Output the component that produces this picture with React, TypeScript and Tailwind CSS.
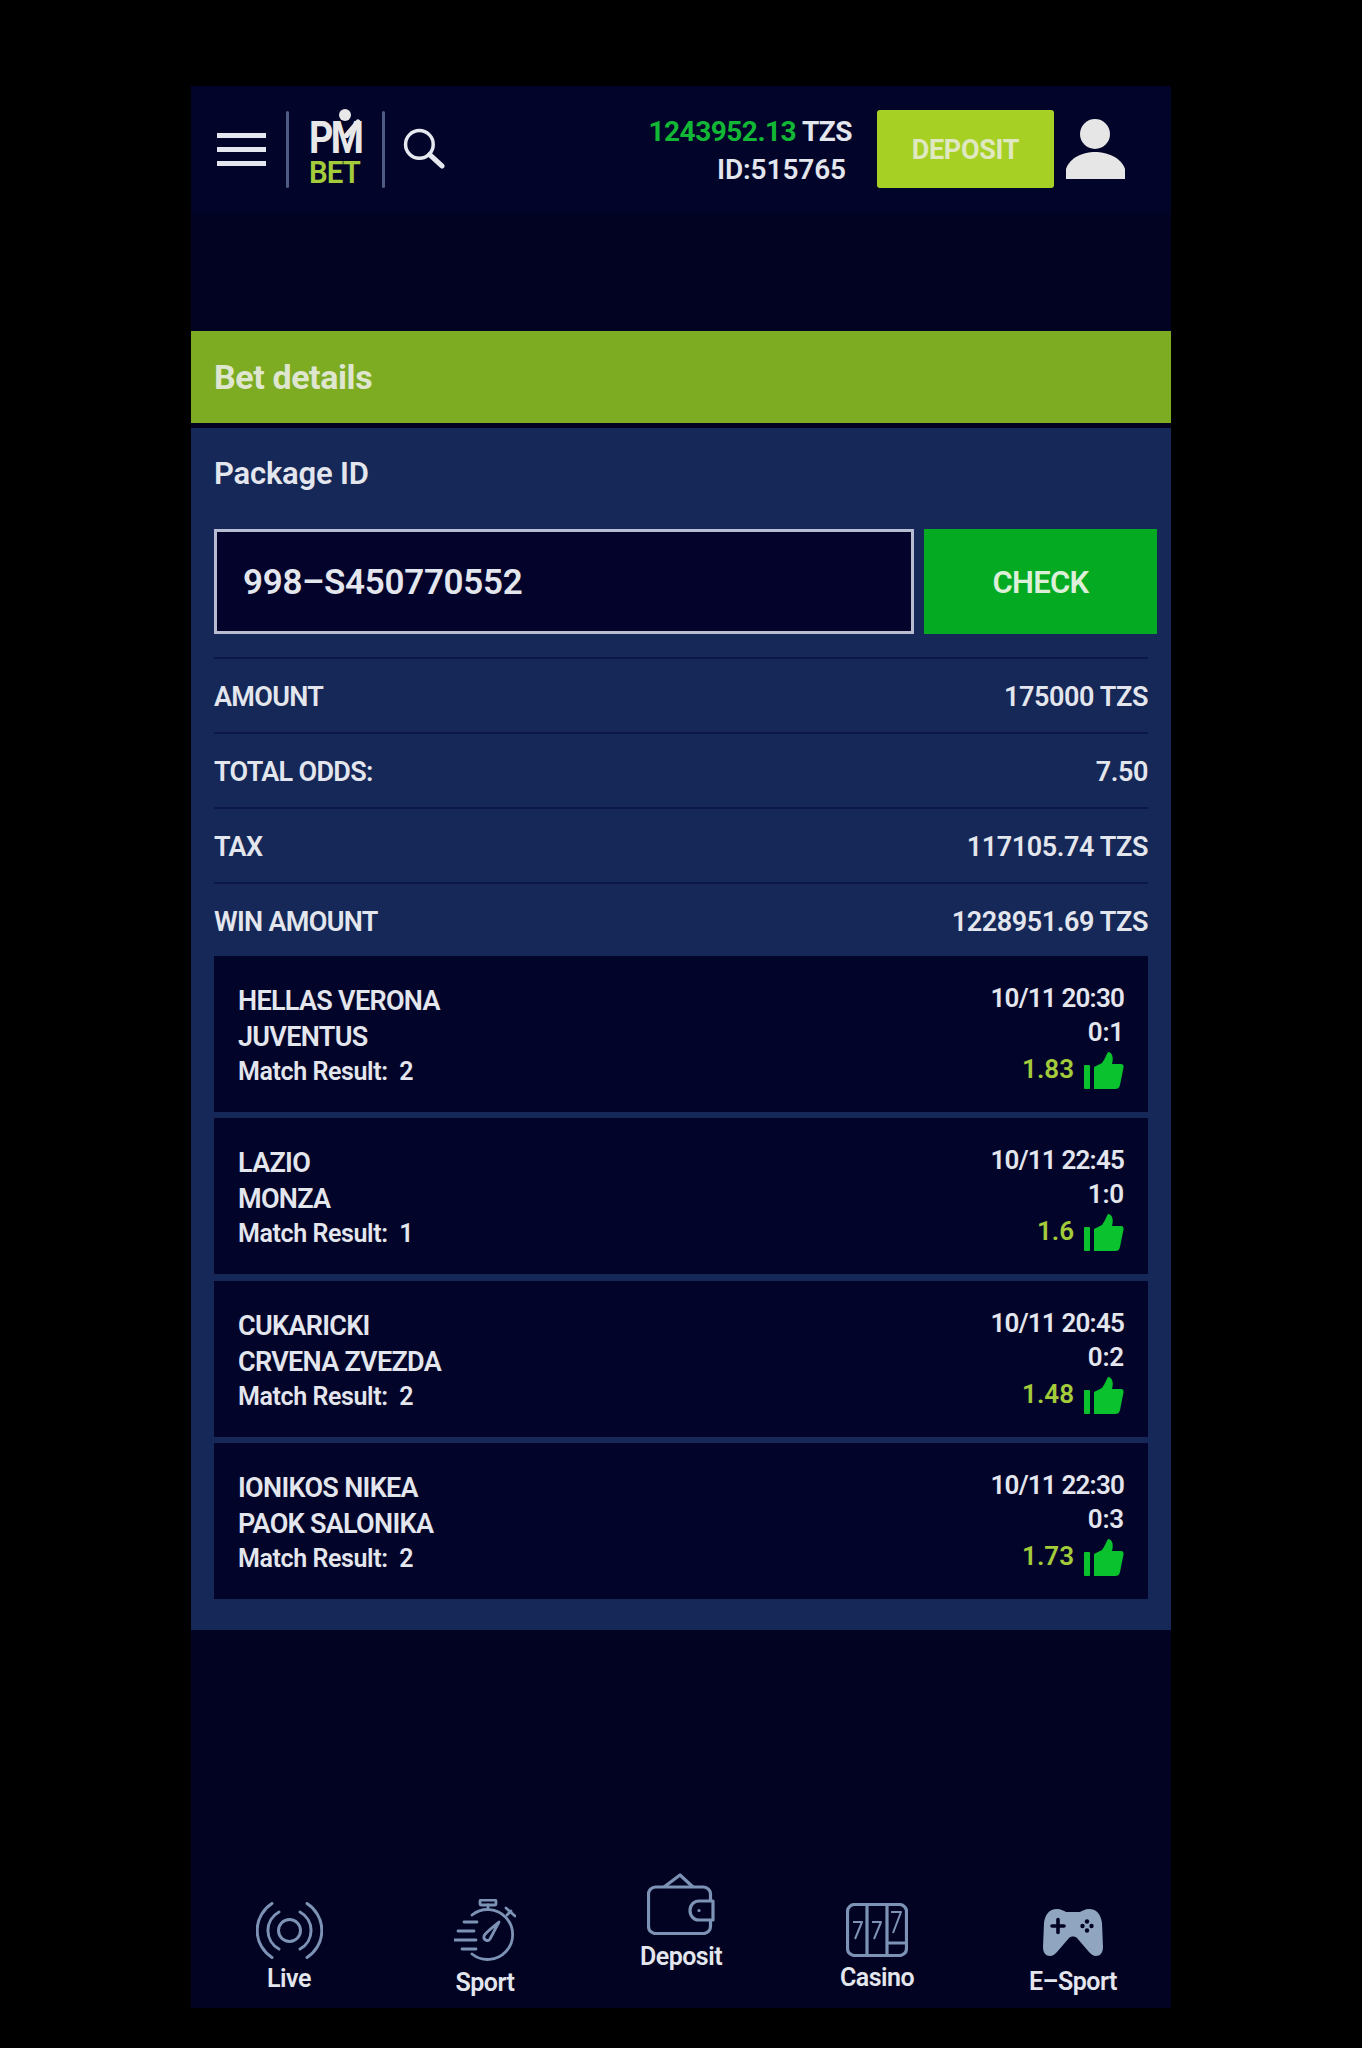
const rows = [
  { label: "AMOUNT", value: "175000 TZS" },
  { label: "TOTAL ODDS:", value: "7.50" },
  { label: "TAX", value: "117105.74 TZS" },
  { label: "WIN AMOUNT", value: "1228951.69 TZS" },
];

const matches = [
  { home: "HELLAS VERONA", away: "JUVENTUS", pick: "2", date: "10/11 20:30", score: "0:1", odds: "1.83" },
  { home: "LAZIO", away: "MONZA", pick: "1", date: "10/11 22:45", score: "1:0", odds: "1.6" },
  { home: "CUKARICKI", away: "CRVENA ZVEZDA", pick: "2", date: "10/11 20:45", score: "0:2", odds: "1.48" },
  { home: "IONIKOS NIKEA", away: "PAOK SALONIKA", pick: "2", date: "10/11 22:30", score: "0:3", odds: "1.73" },
];

function Thumb() {
  return (
    <svg className="mt-[3px]" width="40" height="37" viewBox="0 0 40 37" fill="#0ac22e">
      <rect x="0" y="13" width="6" height="24" rx="1" />
      <path d="M10 15 L18 11 C21 7 22 3 24 0 C28 0 30 5 28 12 L37 12 C40 12 40 15 39 18 L36 33 C35 36 34 37 31 37 H10Z" />
    </svg>
  );
}

function LiveIcon() {
  return (
    <svg width="67" height="57" viewBox="0 0 67 57" fill="none" stroke="#7d93b5" strokeWidth="3" strokeLinecap="round">
      <circle cx="33.5" cy="28.5" r="11" />
      <path d="M23 10 A 21 21 0 0 0 23 47" />
      <path d="M44 10 A 21 21 0 0 1 44 47" />
      <path d="M16 1.5 A 32 32 0 0 0 16 55.5" />
      <path d="M51 1.5 A 32 32 0 0 1 51 55.5" />
    </svg>
  );
}

function SportIcon() {
  return (
    <svg width="62" height="63" viewBox="0 0 62 63" fill="none" stroke="#7d93b5" strokeWidth="2.8" strokeLinecap="round" strokeLinejoin="round">
      <path d="M18 16 A 25 25 0 1 1 18 55" />
      <rect x="26" y="1" width="16" height="5" rx="1.5" />
      <path d="M34 6 V10" />
      <path d="M52 9 L61 17 M53 16 L57 12" />
      <path d="M10 23 H23 M4 32 H20 M0 41 H22 M8 50 H22" />
      <path d="M45 23 L36 40 C34 43 29 41 30 37 C31 34 38 29 45 23Z" />
    </svg>
  );
}

function WalletIcon() {
  return (
    <svg width="68" height="62" viewBox="0 0 68 62" fill="none" stroke="#7d93b5" strokeWidth="3.2" strokeLinejoin="round">
      <rect x="1.5" y="14" width="62" height="46.5" rx="7" />
      <path d="M17 14 L33 2 L46 14" />
      <path d="M66 28 H52 C47 28 43 32 43 37.5 C43 43 47 47 52 47 H66Z" fill="#020322" />
      <circle cx="52" cy="37.5" r="1.6" fill="#7d93b5" stroke="none" />
    </svg>
  );
}

function CasinoIcon() {
  return (
    <svg width="62" height="54" viewBox="0 0 62 54" fill="none" stroke="#7d93b5" strokeWidth="3.2" strokeLinejoin="round">
      <rect x="1.5" y="1.5" width="59" height="51" rx="7" />
      <path d="M21 1.5 V52.5 M41 1.5 V52.5 M41 40 H60" />
      <path d="M7 19 H16 L9 36 M26 19 H35 L28 36 M45 9 H55 L47 30" strokeWidth="2" />
    </svg>
  );
}

function GamepadIcon() {
  return (
    <svg width="60" height="47" viewBox="0 0 60 47">
      <path fill="#8fa5c0" d="M14 0 C6 0 2 6 1 14 L0 38 C0 44 3 47 7 47 C10 47 12 45 14 43 L26 29 C28 27 32 27 34 29 L46 43 C48 45 50 47 53 47 C57 47 60 44 60 38 L59 14 C58 6 54 0 46 0 C42 0 39 2 37 3 H23 C21 2 18 0 14 0Z" />
      <path stroke="#020322" strokeWidth="3.6" strokeLinecap="round" d="M9 17 H21 M15 10.5 V23.5" />
      <g fill="#020322">
        <circle cx="44" cy="12.5" r="2.2" />
        <circle cx="44" cy="21.5" r="2.2" />
        <circle cx="39.5" cy="17" r="2.2" />
        <circle cx="48.5" cy="17" r="2.2" />
      </g>
    </svg>
  );
}

const navItems = [
  { label: "Live", icon: <LiveIcon />, top: "pt-[34px]", gap: "gap-[5px]" },
  { label: "Sport", icon: <SportIcon />, top: "pt-[31px]", gap: "gap-[6px]" },
  { label: "Deposit", icon: <WalletIcon />, top: "pt-[5px]", gap: "gap-[7px]" },
  { label: "Casino", icon: <CasinoIcon />, top: "pt-[35px]", gap: "gap-[6px]" },
  { label: "E–Sport", icon: <GamepadIcon />, top: "pt-[41px]", gap: "gap-[11px]" },
];

export default function App() {
  return (
    <div className="min-h-[2048px] bg-black pt-[86px] font-['Roboto',sans-serif] text-[#e4e6ee]">
      <div className="mx-auto flex h-[1922px] w-[980px] flex-col bg-[#020322]">
        <header className="flex h-[127px] items-center bg-[#03042a] pl-[26px] pr-[46px]">
          <div className="flex w-[49px] flex-col gap-[9px]">
            <span className="h-[5px] bg-[#e4e6f0]" />
            <span className="h-[5px] bg-[#e4e6f0]" />
            <span className="h-[5px] bg-[#e4e6f0]" />
          </div>
          <span className="ml-[20px] h-[77px] w-[3px] rounded-full bg-[#4f5a85]" />
          <div className="relative ml-[20px] flex w-[52px] flex-col items-start pt-[4px]">
            <span className="h-[40px] origin-left scale-x-[0.86] text-[44px] font-bold leading-[40px] tracking-[-3px] text-[#e8e8e8]">PM</span>
            <span className="absolute left-[30px] top-[-5px] h-[12px] w-[12px] rounded-full bg-[#e8e8e8]" />
            <svg className="absolute left-[26px] top-[4px]" width="26" height="20" viewBox="0 0 26 20" fill="none" stroke="#e8e8e8" strokeWidth="5" strokeLinecap="round">
              <path d="M11 18 L23 4" />
            </svg>
            <span className="origin-left scale-x-[0.92] text-[32px] font-semibold leading-[28px] tracking-[-1px] text-[#a4cc3a]">BET</span>
          </div>
          <span className="ml-[21px] h-[77px] w-[3px] rounded-full bg-[#4f5a85]" />
          <svg className="ml-[18px] mt-[-2px]" width="42" height="41" viewBox="0 0 41 40" fill="none" stroke="#e6e8f0" strokeLinecap="round">
            <circle cx="16" cy="16" r="13.5" strokeWidth="3.4" />
            <path d="M26 26 L38 37" strokeWidth="5" />
          </svg>
          <div className="ml-auto flex flex-col items-end pt-[2px]">
            <p className="text-[28px] font-bold leading-[38px] tracking-[-0.5px]">
              <span className="text-[#12b835]">1243952.13</span> TZS
            </p>
            <p className="pr-[6px] text-[28px] font-semibold leading-[38px] tracking-[-0.1px]">ID:515765</p>
          </div>
          <button className="ml-[25px] mt-[-2px] flex h-[78px] w-[177px] items-center justify-center rounded-[3px] bg-[#a6d024] pt-[3px] text-[27px] font-bold tracking-[-0.3px] text-[#dfe8c0]">
            DEPOSIT
          </button>
          <svg className="ml-[12px] mt-[-2px]" width="59" height="60" viewBox="0 0 59 60" fill="#e6e6e6">
            <circle cx="29" cy="15" r="15" />
            <path d="M0 60 V50 C4 38 18 33 29 33 C40 33 55 38 59 50 V60Z" />
          </svg>
        </header>

        <div className="mt-[118px] flex h-[92px] items-center bg-[#7dac23] pl-[23px] pt-[1px]">
          <h1 className="text-[34px] font-bold tracking-[-0.4px] text-[#dfe6cf]">Bet details</h1>
        </div>

        <section className="mt-[5px] bg-[#152857] pb-[31px] pl-[23px] pr-[14px]">
          <p className="pt-[28px] text-[31px] font-semibold leading-[36px] tracking-[-0.2px]">Package ID</p>
          <div className="mt-[37px] flex gap-[10px]">
            <div className="flex h-[105px] w-[700px] items-center border-[3px] border-[#b8bcd0] bg-[#03032b] pl-[26px] pt-[4px] text-[35px] font-semibold tracking-[-0.3px]">
              998–S450770552
            </div>
            <button className="h-[105px] w-[233px] bg-[#04ab22] pt-[3px] text-[31px] font-semibold tracking-[-0.7px] text-[#dcefd8]">
              CHECK
            </button>
          </div>

          <div className="mr-[9px] mt-[23px]">
            {rows.map((row) => (
              <div
                key={row.label}
                className="flex h-[75px] items-center justify-between border-t-2 border-[#0b1745] pt-[3px] text-[27px] font-semibold tracking-[-0.7px]"
              >
                <span>{row.label}</span>
                <span className="tracking-[-0.4px]">{row.value}</span>
              </div>
            ))}
          </div>

          <div className="mr-[9px] mt-[-1px] flex flex-col gap-[6.4px]">
            {matches.map((match) => (
              <div key={match.home} className="flex h-[156px] justify-between bg-[#03042a] pl-[24px] pr-[24px] pt-[27px]">
                <div className="text-[27px] font-semibold tracking-[-0.7px]">
                  <p className="leading-[36px]">{match.home}</p>
                  <p className="leading-[36px]">{match.away}</p>
                  <p className="text-[25px] leading-[34px] tracking-[-0.4px]">Match Result:&nbsp; {match.pick}</p>
                </div>
                <div className="mt-[-2px] flex flex-col items-end text-[26px] font-semibold tracking-[-0.8px]">
                  <p className="leading-[34px]">{match.date}</p>
                  <p className="leading-[34px] tracking-[-0.2px]">{match.score}</p>
                  <div className="flex items-start gap-[10px]">
                    <span className="pt-[3px] leading-[34px] tracking-[0px] text-[#a4cc3a]">{match.odds}</span>
                    <Thumb />
                  </div>
                </div>
              </div>
            ))}
          </div>
        </section>

        <nav className="mt-auto grid h-[140px] grid-cols-5 items-start">
          {navItems.map((item) => (
            <div key={item.label} className={`flex flex-col items-center ${item.top} ${item.gap}`}>
              {item.icon}
              <span className="text-[25px] font-semibold leading-[30px] tracking-[-0.5px]">{item.label}</span>
            </div>
          ))}
        </nav>
      </div>
    </div>
  );
}
